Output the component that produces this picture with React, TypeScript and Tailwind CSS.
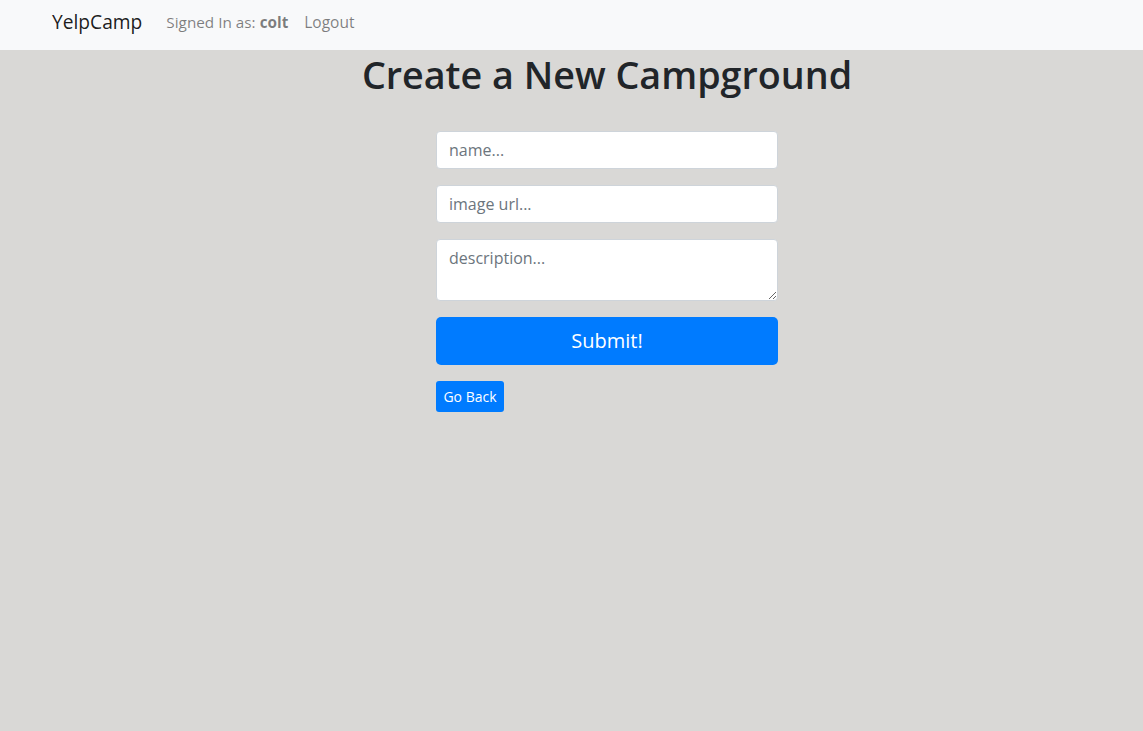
export default function App() {
  return (
    <div className="min-h-[731px] bg-[#d9d8d6] font-['Open_Sans',sans-serif] text-[#212529]">
      <nav className="flex h-[50px] items-start bg-[#f8f9fa] pl-[52px] pt-[7px]">
        <span className="mr-4 text-[19.2px] leading-[30px] text-black/90">YelpCamp</span>
        <span className="px-2 text-[15.3px] leading-[30px] text-black/50">
          Signed In as: <b className="font-bold">colt</b>
        </span>
        <span className="px-2 text-[15.5px] leading-[30px] text-black/50">Logout</span>
      </nav>

      <div className="flex flex-col items-center pl-[71px]">
        <h1 className="mt-[1px] text-[37.7px] font-semibold leading-[48px] whitespace-nowrap">
          Create a New Campground
        </h1>

        <form className="mt-[32px] flex w-[342px] flex-col">
          <input
            className="mb-4 h-[38px] w-full rounded border border-[#ced4da] bg-white px-3 text-[16px] placeholder:text-[#6c757d]"
            placeholder="name..."
          />
          <input
            className="mb-4 h-[38px] w-full rounded border border-[#ced4da] bg-white px-3 text-[16px] placeholder:text-[#6c757d]"
            placeholder="image url..."
          />
          <textarea
            rows={2}
            className="mb-4 h-[62px] w-full rounded border border-[#ced4da] bg-white px-3 py-[6px] text-[16px] leading-6 placeholder:text-[#6c757d]"
            placeholder="description..."
          />
          <button
            type="button"
            className="mb-4 h-[48px] w-full rounded-[5px] bg-[#007bff] text-[20px] text-white"
          >
            Submit!
          </button>
          <div>
            <button
              type="button"
              className="h-[31px] w-[68px] rounded-[3px] bg-[#007bff] text-[14px] text-white"
            >
              Go Back
            </button>
          </div>
        </form>
      </div>
    </div>
  )
}
